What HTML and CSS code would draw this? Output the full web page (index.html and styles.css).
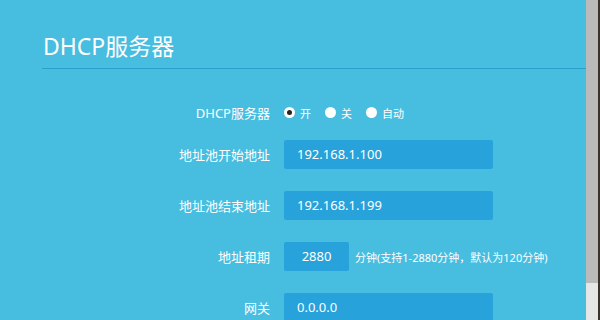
FILE: index.html
```html
<!DOCTYPE html>
<html lang="zh">
<head>
<meta charset="utf-8">
<link rel="stylesheet" href="styles.css">
</head>
<body>
<div class="frame">
  <main class="content">
    <h1 class="title">DHCP服务器</h1>
    <div class="form">
      <div class="row row-first">
        <div class="label">DHCP服务器</div>
        <div class="control radios">
          <span class="radio"><span class="dot on"></span>开</span>
          <span class="radio"><span class="dot"></span>关</span>
          <span class="radio"><span class="dot"></span>自动</span>
        </div>
      </div>
      <div class="row">
        <div class="label">地址池开始地址</div>
        <div class="control"><div class="input wide">192.168.1.100</div></div>
      </div>
      <div class="row">
        <div class="label">地址池结束地址</div>
        <div class="control"><div class="input wide">192.168.1.199</div></div>
      </div>
      <div class="row">
        <div class="label">地址租期</div>
        <div class="control"><div class="input short">2880</div><span class="hint">分钟(支持1-2880分钟，默认为120分钟)</span></div>
      </div>
      <div class="row">
        <div class="label">网关</div>
        <div class="control"><div class="input wide">0.0.0.0</div></div>
      </div>
    </div>
  </main>
  <div class="scrollbar"><div class="thumb"></div><div class="track"></div></div>
  <div class="edge"></div>
</div>
</body>
</html>
```
FILE: styles.css
```css
html, body {
  margin: 0;
  padding: 0;
  height: 320px;
  overflow: hidden;
}
body {
  background: #47bde0;
  font-family: "Noto Sans", "Noto Sans CJK SC", sans-serif;
  color: #fff;
}
.frame {
  display: flex;
  height: 320px;
}
.content {
  flex: 1;
  padding-top: 31px;
  overflow: hidden;
}
.title {
  margin: 0 0 0 42px;
  font-weight: normal;
  font-size: 23px;
  line-height: 30px;
  height: 37px;
  padding-left: 1px;
  border-bottom: 1px solid #2a9fcc;
}
.form {
  margin-top: 29px;
  display: flex;
  flex-direction: column;
  gap: 22px;
}
.row {
  display: grid;
  grid-template-columns: 270px 1fr;
  column-gap: 14px;
  height: 29px;
  align-items: center;
}
.row-first {
  margin-bottom: -9px;
}
.label {
  text-align: right;
  font-size: 13px;
}
.control {
  display: flex;
  align-items: center;
  height: 29px;
}
.radios {
  font-size: 11px;
}
.radio {
  display: flex;
  align-items: center;
  margin-right: 14px;
}
.dot {
  width: 11px;
  height: 11px;
  border-radius: 50%;
  background: #fff;
  margin-right: 5px;
  display: flex;
  align-items: center;
  justify-content: center;
}
.dot.on::after {
  content: "";
  width: 5px;
  height: 5px;
  border-radius: 50%;
  background: #2a2320;
}
.input {
  background: #27a2da;
  height: 29px;
  line-height: 29px;
  font-size: 13px;
  border-radius: 2px;
  box-sizing: border-box;
}
.wide {
  width: 209px;
  padding-left: 13px;
}
.short {
  width: 65px;
  text-align: center;
}
.hint {
  font-size: 11px;
  margin-left: 6px;
}
.scrollbar {
  width: 12px;
  display: flex;
  flex-direction: column;
}
.thumb {
  height: 283px;
  background: #bababa;
}
.track {
  flex: 1;
  background: #e6e6e6;
}
.edge {
  width: 2px;
  background: #3b322a;
}
```
